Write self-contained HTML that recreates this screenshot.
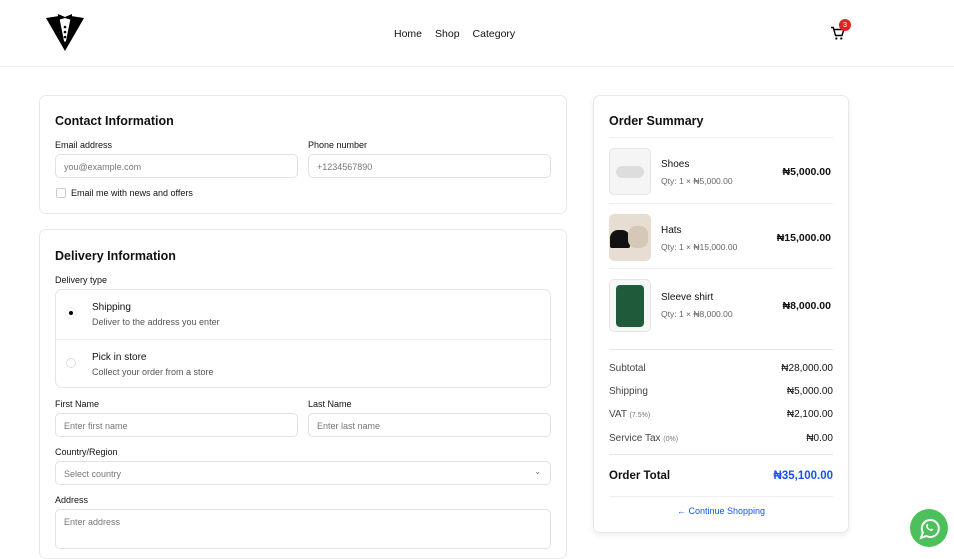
<!DOCTYPE html>
<html><head><meta charset="utf-8"><style>
*{box-sizing:border-box;margin:0;padding:0}
body{width:954px;height:542px;overflow:hidden;background:#fff;font-family:"Liberation Sans",sans-serif;color:#111;position:relative}
.hdr{height:67px;border-bottom:1px solid #eee;position:relative}
.nav{position:absolute;top:28px;left:394px;font-size:10.5px;color:#111}
.nav span{margin-right:13px}
.card{position:absolute;border:1px solid #e8e8e8;border-radius:7px;background:#fff}
h2{font-size:12.5px;font-weight:600;position:absolute}
.lbl{position:absolute;font-size:9px;color:#111}
.inp{position:absolute;height:24px;border:1px solid #e2e2e2;border-radius:5px;font-size:9px;color:#777;padding:7px 8px}
.row{position:absolute;left:15px;right:15px;font-size:10px;color:#444;display:flex;justify-content:space-between}
.row b{color:#111;font-weight:400}
.small{font-size:7px;color:#777}
</style></head><body>
<div class="hdr">
<svg style="position:absolute;left:45px;top:12px" width="40" height="40" viewBox="0 0 40 40">
<path d="M1 6 L14 4 L19 29 L20 30 L21 29 L26 4 L39 6 L20 39 Z" fill="#000"/>
<path d="M13 5 L13 -1 L20 2 L27 -1 L27 5 L20 3 Z" fill="#000" transform="translate(0,3)"/>
<circle cx="20" cy="15" r="1.3" fill="#000"/><circle cx="20" cy="20" r="1.3" fill="#000"/><circle cx="20" cy="25" r="1.3" fill="#000"/>
</svg>
<div class="nav"><span>Home</span><span>Shop</span><span>Category</span></div>
<svg style="position:absolute;left:830px;top:26px" width="16" height="15" viewBox="0 0 16 15"><path d="M1 1.5h2.3l2.2 8h6.5l1.8-6H4.2" fill="none" stroke="#000" stroke-width="1.4"/><circle cx="6.3" cy="12.5" r="1.1" fill="#000"/><circle cx="11.3" cy="12.5" r="1.1" fill="#000"/></svg>
<div style="position:absolute;left:839px;top:19px;width:12px;height:12px;border-radius:50%;background:#e02424;color:#fff;font-size:7.5px;text-align:center;line-height:12px">3</div>
</div>

<div class="card" style="left:39px;top:95px;width:528px;height:119px">
<h2 style="left:15px;top:18px">Contact Information</h2>
<div class="lbl" style="left:15px;top:44px">Email address</div>
<div class="lbl" style="left:268px;top:44px">Phone number</div>
<div class="inp" style="left:15px;top:58px;width:243px">you@example.com</div>
<div class="inp" style="left:268px;top:58px;width:243px">+1234567890</div>
<div style="position:absolute;left:16px;top:92px;width:10px;height:10px;border:1px solid #ccc;border-radius:2px"></div>
<div class="lbl" style="left:31px;top:92px">Email me with news and offers</div>
</div>

<div class="card" style="left:39px;top:229px;width:528px;height:330px">
<h2 style="left:15px;top:19px">Delivery Information</h2>
<div class="lbl" style="left:15px;top:45px">Delivery type</div>
<div style="position:absolute;left:15px;top:59px;width:496px;height:99px;border:1px solid #e5e5e5;border-radius:7px">
<div style="position:absolute;left:0;right:0;top:49px;border-top:1px solid #eee"></div>
<div style="position:absolute;left:10px;top:18px;width:10px;height:10px;border-radius:50%;background:#fff;box-shadow:0 0 2px #ccc"><div style="margin:3px;width:4px;height:4px;border-radius:50%;background:#000"></div></div>
<div style="position:absolute;left:36px;top:12px;font-size:10px">Shipping</div>
<div style="position:absolute;left:36px;top:27px;font-size:9px;color:#555">Deliver to the address you enter</div>
<div style="position:absolute;left:10px;top:68px;width:10px;height:10px;border-radius:50%;border:1px solid #ddd"></div>
<div style="position:absolute;left:36px;top:62px;font-size:10px">Pick in store</div>
<div style="position:absolute;left:36px;top:77px;font-size:9px;color:#555">Collect your order from a store</div>
</div>
<div class="lbl" style="left:15px;top:169px">First Name</div>
<div class="lbl" style="left:268px;top:169px">Last Name</div>
<div class="inp" style="left:15px;top:183px;width:243px">Enter first name</div>
<div class="inp" style="left:268px;top:183px;width:243px">Enter last name</div>
<div class="lbl" style="left:15px;top:217px">Country/Region</div>
<div class="inp" style="left:15px;top:231px;width:496px">Select country<span style="position:absolute;right:9px;top:5px;font-size:8px">⌄</span></div>
<div class="lbl" style="left:15px;top:265px">Address</div>
<div class="inp" style="left:15px;top:279px;width:496px;height:40px">Enter address</div>
</div>

<div class="card" style="left:593px;top:95px;width:256px;height:438px;box-shadow:0 2px 6px rgba(0,0,0,.08)">
<h2 style="left:15px;top:18px">Order Summary</h2>
<div style="position:absolute;left:15px;right:15px;top:41px;border-top:1px solid #eee"></div>
<div style="position:absolute;left:15px;top:52px;width:42px;height:47px;border:1px solid #e5e5e5;border-radius:5px;background:#f5f5f5"><div style="margin:17px 6px;height:12px;border-radius:6px;background:#ddd"></div></div>
<div style="position:absolute;left:67px;top:63px;font-size:10px">Shoes</div>
<div style="position:absolute;left:67px;top:80px;font-size:8.5px;color:#666">Qty: 1 × ₦5,000.00</div>
<div style="position:absolute;right:17px;top:70px;font-size:10.5px;font-weight:700">₦5,000.00</div>
<div style="position:absolute;left:15px;right:15px;top:107px;border-top:1px solid #eee"></div>
<div style="position:absolute;left:15px;top:118px;width:42px;height:47px;border-radius:5px;background:#e8ddd2"><div style="position:absolute;left:1px;top:16px;width:20px;height:18px;background:#111;border-radius:8px 8px 2px 2px"></div><div style="position:absolute;left:19px;top:12px;width:20px;height:22px;background:#d5c8b8;border-radius:8px"></div></div>
<div style="position:absolute;left:67px;top:129px;font-size:10px">Hats</div>
<div style="position:absolute;left:67px;top:146px;font-size:8.5px;color:#666">Qty: 1 × ₦15,000.00</div>
<div style="position:absolute;right:17px;top:136px;font-size:10.5px;font-weight:700">₦15,000.00</div>
<div style="position:absolute;left:15px;right:15px;top:172px;border-top:1px solid #eee"></div>
<div style="position:absolute;left:15px;top:183px;width:42px;height:53px;border:1px solid #e5e5e5;border-radius:5px;background:#f7f7f7"><div style="position:absolute;left:6px;top:5px;width:28px;height:42px;background:#1f5a3a;border-radius:4px"></div></div>
<div style="position:absolute;left:67px;top:196px;font-size:10px">Sleeve shirt</div>
<div style="position:absolute;left:67px;top:213px;font-size:8.5px;color:#666">Qty: 1 × ₦8,000.00</div>
<div style="position:absolute;right:17px;top:204px;font-size:10.5px;font-weight:700">₦8,000.00</div>
<div style="position:absolute;left:15px;right:15px;top:253px;border-top:1px solid #e5e5e5"></div>
<div class="row" style="top:267px"><span>Subtotal</span><b>₦28,000.00</b></div>
<div class="row" style="top:290px"><span>Shipping</span><b>₦5,000.00</b></div>
<div class="row" style="top:313px"><span>VAT <span class="small">(7.5%)</span></span><b>₦2,100.00</b></div>
<div class="row" style="top:337px"><span>Service Tax <span class="small">(0%)</span></span><b>₦0.00</b></div>
<div style="position:absolute;left:15px;right:15px;top:358px;border-top:1px solid #e5e5e5"></div>
<div class="row" style="top:374px;font-size:11.5px;font-weight:700;color:#111"><span>Order Total</span><span style="color:#1a4ff0">₦35,100.00</span></div>
<div style="position:absolute;left:15px;right:15px;top:400px;border-top:1px solid #eee"></div>
<div style="position:absolute;left:0;right:0;top:410px;text-align:center;font-size:9px;color:#1a4ff0">← Continue Shopping</div>
</div>

<div style="position:absolute;left:910px;top:509px;width:38px;height:38px;border-radius:50%;background:#4cc05a">
<svg width="38" height="38" viewBox="0 0 38 38"><path d="M11 29 L12.8 23.5 A8.5 8.5 0 1 1 16.3 27 Z" fill="none" stroke="#fff" stroke-width="2"/><path d="M16 16 q0 5 6 6 l1.5-1.5 -2-1 -1 1 q-2-1-3-3 l1-1 -1-2 z" fill="#fff"/></svg>
</div>
</body></html>
